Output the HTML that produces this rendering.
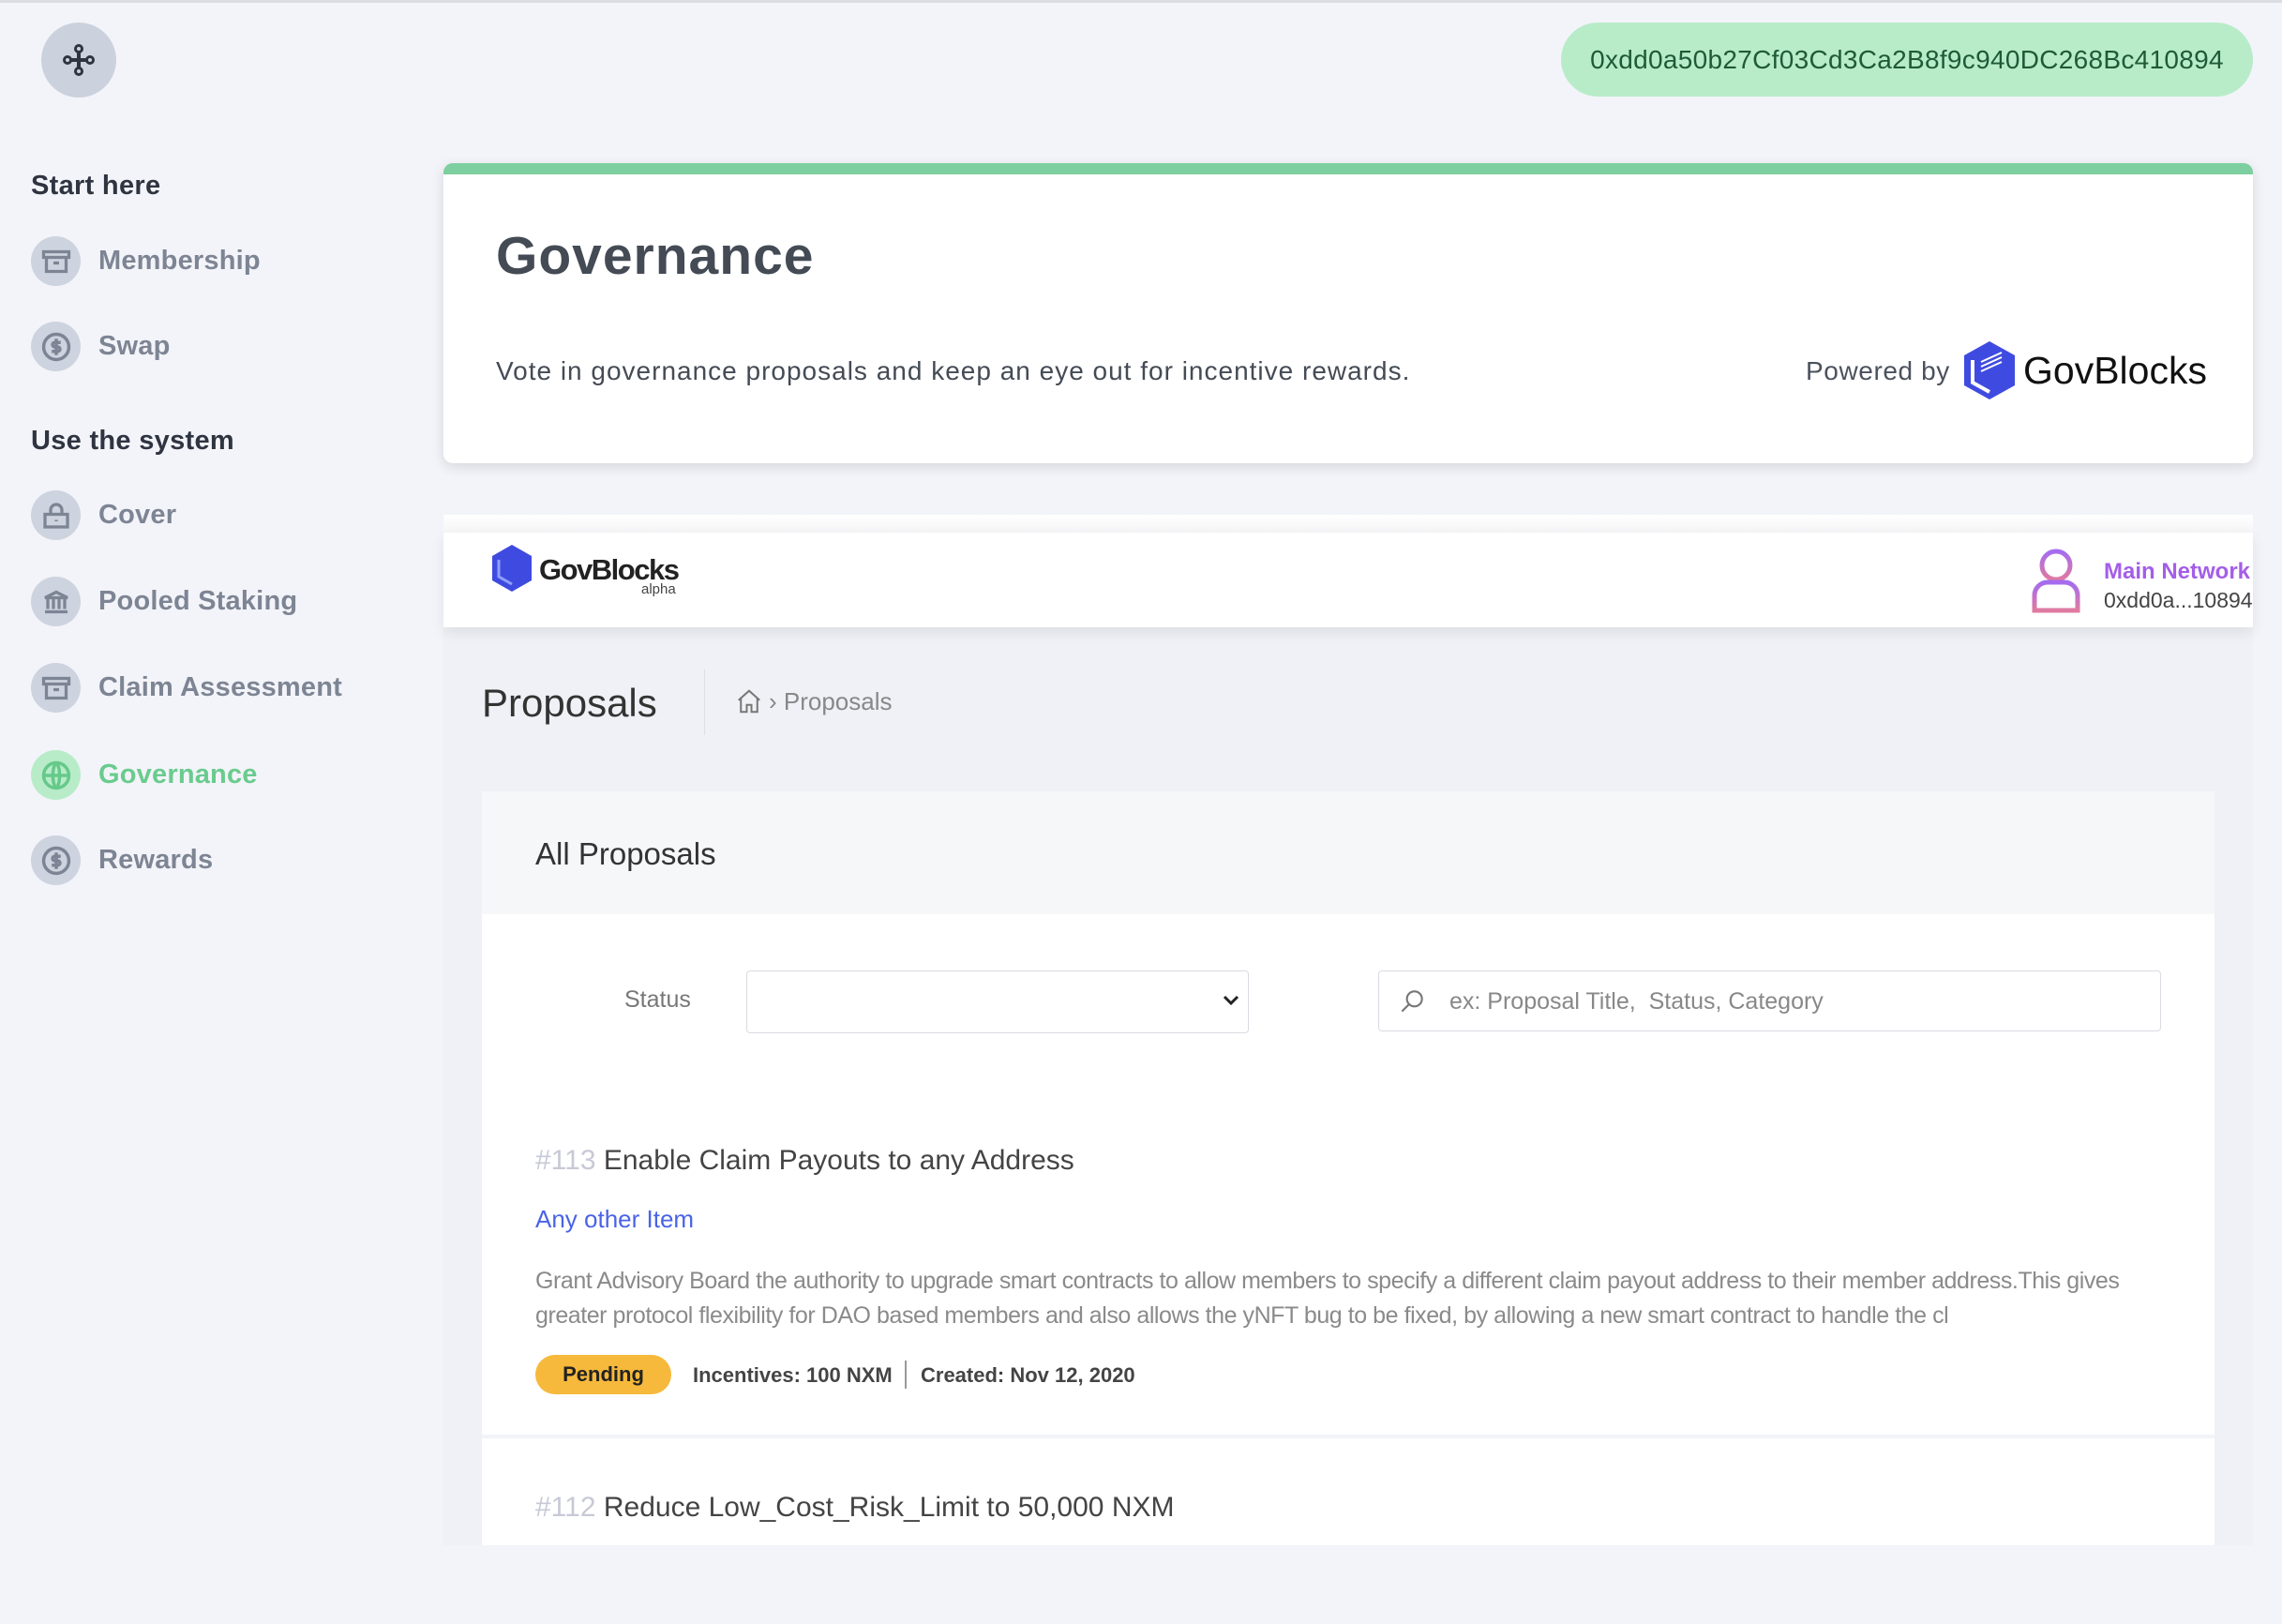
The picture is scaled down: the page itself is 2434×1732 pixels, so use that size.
<!DOCTYPE html>
<html><head><meta charset="utf-8"><style>
*{box-sizing:border-box;margin:0;padding:0}
body{width:2434px;height:1732px;background:#f3f4f9;font-family:"Liberation Sans",sans-serif;position:relative;overflow:hidden}
.a{position:absolute;white-space:nowrap}
.ic{position:absolute;left:33px;width:53px;height:53px;border-radius:50%;background:#cdd3df;display:flex;align-items:center;justify-content:center}
.nt{position:absolute;left:105px;font-size:29px;color:#7d8594;font-weight:bold;letter-spacing:0.2px}
.sh{position:absolute;left:33px;font-size:29px;color:#2e3440;font-weight:bold;letter-spacing:0.3px}
</style></head><body>
<div class="a" style="left:0;top:0;width:2434px;height:3px;background:#dadce2"></div>
<div class="a" style="left:44px;top:24px;width:80px;height:80px;border-radius:50%;background:#cbd2de;display:flex;align-items:center;justify-content:center">
<svg width="40" height="40" viewBox="0 0 40 40" fill="none" stroke="#2e3440" stroke-width="3"><circle cx="20" cy="8" r="3.5"/><circle cx="20" cy="32" r="3.5"/><circle cx="8" cy="20" r="3.5"/><circle cx="32" cy="20" r="3.5"/><path d="M20 12v16M12 20h16" stroke-width="4"/></svg></div>
<div class="a" style="left:1665px;top:24px;width:738px;height:79px;border-radius:40px;background:#b8ecc9;color:#1f5a36;font-size:28px;display:flex;align-items:center;justify-content:center;letter-spacing:0.3px">0xdd0a50b27Cf03Cd3Ca2B8f9c940DC268Bc410894</div>

<div class="sh" style="top:182px">Start here</div>
<div class="ic" style="top:252px"><svg width="36" height="36" viewBox="0 0 24 24" fill="none" stroke="#7d8594" stroke-width="2.2"><rect x="3" y="5" width="18" height="4"/><path d="M5 9v10h14V9M10 13h4"/></svg></div><div class="nt" style="top:262px">Membership</div>
<div class="ic" style="top:343px"><svg width="38" height="38" viewBox="0 0 24 24" fill="none" stroke="#7d8594" stroke-width="2.2"><circle cx="12" cy="12" r="8.5"/><path d="M15 9h-4a1.5 1.5 0 000 3h2a1.5 1.5 0 010 3H9M12 6.5v11"/></svg></div><div class="nt" style="top:353px">Swap</div>
<div class="sh" style="top:454px">Use the system</div>
<div class="ic" style="top:523px"><svg width="36" height="36" viewBox="0 0 24 24" fill="none" stroke="#7d8594" stroke-width="2.2"><rect x="4" y="11" width="16" height="9"/><path d="M8 11V8a4 4 0 018 0v3M12 15v1"/></svg></div><div class="nt" style="top:533px">Cover</div>
<div class="ic" style="top:615px"><svg width="36" height="36" viewBox="0 0 24 24" fill="none" stroke="#7d8594" stroke-width="2.2"><path d="M4 9l8-4 8 4zM6 10v7M10 10v7M14 10v7M18 10v7M4 19h16"/></svg></div><div class="nt" style="top:625px">Pooled Staking</div>
<div class="ic" style="top:707px"><svg width="36" height="36" viewBox="0 0 24 24" fill="none" stroke="#7d8594" stroke-width="2.2"><rect x="3" y="5" width="18" height="4"/><path d="M5 9v10h14V9M10 13h4"/></svg></div><div class="nt" style="top:717px">Claim Assessment</div>
<div class="ic" style="top:800px;background:#b8ecc9"><svg width="38" height="38" viewBox="0 0 24 24" fill="none" stroke="#66c98a" stroke-width="2.2"><circle cx="12" cy="12" r="8.5"/><path d="M3.5 12h17M12 3.5c-3 3-3 14 0 17M12 3.5c3 3 3 14 0 17"/></svg></div><div class="nt" style="top:810px;color:#6acb8e">Governance</div>
<div class="ic" style="top:891px"><svg width="38" height="38" viewBox="0 0 24 24" fill="none" stroke="#7d8594" stroke-width="2.2"><circle cx="12" cy="12" r="8.5"/><path d="M15 9h-4a1.5 1.5 0 000 3h2a1.5 1.5 0 010 3H9M12 6.5v11"/></svg></div><div class="nt" style="top:901px">Rewards</div>

<div class="a" style="left:473px;top:174px;width:1930px;height:320px;background:#fff;border-radius:10px;border-top:12px solid #7dcf9f;box-shadow:0 4px 14px rgba(0,0,0,0.12)"></div>
<div class="a" style="left:529px;top:240px;font-size:57px;font-weight:bold;color:#444b55;letter-spacing:1px">Governance</div>
<div class="a" style="left:529px;top:380px;font-size:28px;color:#444b55;letter-spacing:1px">Vote in governance proposals and keep an eye out for incentive rewards.</div>
<div class="a" style="left:1926px;top:380px;font-size:28px;color:#4b525d;letter-spacing:0.6px">Powered by</div>
<svg class="a" style="left:2093px;top:362px" width="58" height="66" viewBox="0 0 58 66"><path d="M29 2L56 17v32L29 64 2 49V17z" fill="#3f4be0"/><path d="M11 22v24l18 10" stroke="#fff" stroke-width="4" fill="none"/><path d="M20 24l22-10M20 29l22-10M20 34l22-10" stroke="#fff" stroke-width="2"/></svg>
<div class="a" style="left:2158px;top:372px;font-size:41px;color:#111">GovBlocks</div>

<div class="a" style="left:473px;top:549px;width:1930px;height:1099px;background:#f0f1f6"></div>
<div class="a" style="left:473px;top:549px;width:1930px;height:20px;background:linear-gradient(#fff,#f5f5f7)"></div>
<div class="a" style="left:473px;top:568px;width:1930px;height:101px;background:#fff;box-shadow:0 6px 14px rgba(0,0,0,0.08)"></div>
<svg class="a" style="left:523px;top:580px" width="46" height="52" viewBox="0 0 46 52"><path d="M23 1l21 12v26L23 51 2 39V13z" fill="#3f4be0"/><path d="M9 17v18l14 8" stroke="#8fa0ff" stroke-width="3" fill="none"/></svg>
<div class="a" style="left:575px;top:590px;font-size:31px;font-weight:bold;color:#222;letter-spacing:-1.5px">GovBlocks</div>
<div class="a" style="left:684px;top:620px;font-size:15px;color:#444">alpha</div>
<svg class="a" style="left:2162px;top:583px" width="62" height="72" viewBox="0 0 62 72"><defs><linearGradient id="g" x1="0" y1="0" x2="0" y2="1"><stop offset="0" stop-color="#a46cf0"/><stop offset="1" stop-color="#e07aa0"/></linearGradient></defs><circle cx="31" cy="20" r="15" fill="none" stroke="url(#g)" stroke-width="5"/><path d="M8 68V52a14 14 0 0114-14h18a14 14 0 0114 14v16z" fill="none" stroke="url(#g)" stroke-width="5"/></svg>
<div class="a" style="left:2244px;top:596px;font-size:24px;font-weight:bold;color:#a45ee8">Main Network</div>
<div class="a" style="left:2244px;top:627px;font-size:23px;color:#444">0xdd0a...10894</div>

<div class="a" style="left:514px;top:726px;font-size:42px;color:#333">Proposals</div>
<div class="a" style="left:751px;top:714px;width:1px;height:70px;background:#dde0e6"></div>
<svg class="a" style="left:784px;top:733px" width="30" height="30" viewBox="0 0 24 24" fill="none" stroke="#777" stroke-width="1.6"><path d="M3 11l9-8 9 8M5 9v12h5v-6h4v6h5V9"/></svg>
<div class="a" style="left:820px;top:733px;font-size:26px;color:#888">› Proposals</div>

<div class="a" style="left:514px;top:844px;width:1848px;height:804px;background:#fff"></div>
<div class="a" style="left:514px;top:844px;width:1848px;height:131px;background:#f6f7f9"></div>
<div class="a" style="left:571px;top:892px;font-size:33px;color:#333">All Proposals</div>
<div class="a" style="left:666px;top:1052px;font-size:25px;color:#777">Status</div>
<div class="a" style="left:796px;top:1035px;width:536px;height:67px;border:1px solid #d8dbe0;border-radius:4px"></div>
<svg class="a" style="left:1304px;top:1060px" width="18" height="14" viewBox="0 0 18 14"><path d="M2 3l7 7 7-7" stroke="#222" stroke-width="3" fill="none"/></svg>
<div class="a" style="left:1470px;top:1035px;width:835px;height:65px;border:1px solid #d8dbe0;border-radius:4px"></div>
<svg class="a" style="left:1490px;top:1052px" width="32" height="32" viewBox="0 0 24 24" fill="none" stroke="#777" stroke-width="1.6"><circle cx="14" cy="10" r="6"/><path d="M10 14l-6 6"/></svg>
<div class="a" style="left:1546px;top:1054px;font-size:25px;color:#888">ex: Proposal Title,&nbsp; Status, Category</div>

<div class="a" style="left:571px;top:1221px;font-size:30px;color:#444"><span style="color:#c7c9d6">#113</span> Enable Claim Payouts to any Address</div>
<div class="a" style="left:571px;top:1285px;font-size:26px;color:#4a63e6">Any other Item</div>
<div class="a" style="left:571px;top:1348px;font-size:25px;color:#8a8a8a;line-height:37px;white-space:normal;width:1730px;letter-spacing:-0.45px">Grant Advisory Board the authority to upgrade smart contracts to allow members to specify a different claim payout address to their member address.This gives greater protocol flexibility for DAO based members and also allows the yNFT bug to be fixed, by allowing a new smart contract to handle the cl</div>
<div class="a" style="left:571px;top:1445px;width:145px;height:42px;border-radius:21px;background:#f6b93b;font-size:22px;color:#222;font-weight:bold;display:flex;align-items:center;justify-content:center">Pending</div>
<div class="a" style="left:739px;top:1454px;font-size:22px;color:#444;font-weight:bold">Incentives: 100 NXM</div>
<div class="a" style="left:965px;top:1451px;width:2px;height:30px;background:#999"></div>
<div class="a" style="left:982px;top:1454px;font-size:22px;color:#444;font-weight:bold">Created: Nov 12, 2020</div>
<div class="a" style="left:514px;top:1530px;width:1848px;height:4px;background:#f3f4f9"></div>
<div class="a" style="left:571px;top:1591px;font-size:30px;color:#444"><span style="color:#c7c9d6">#112</span> Reduce Low_Cost_Risk_Limit to 50,000 NXM</div>
</body></html>
